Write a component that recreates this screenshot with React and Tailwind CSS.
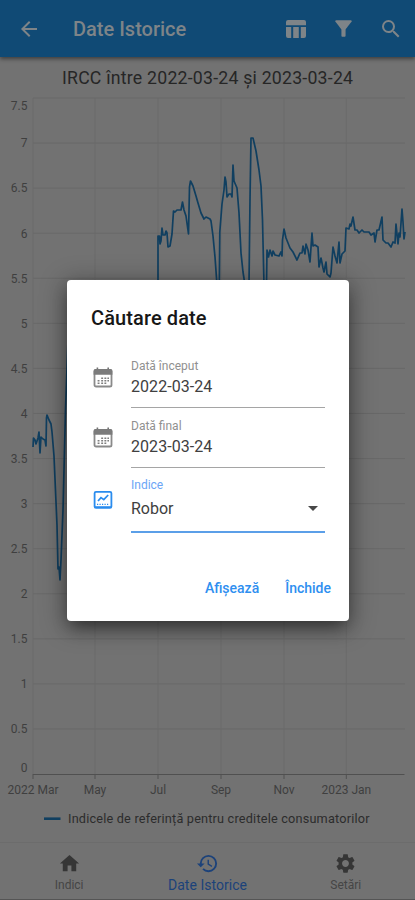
import React from "react";

const FONT = "font-[Roboto,'Noto_Sans',sans-serif]";

// Material glyphs on a 24px grid
const ICONS = {
  back: "M20 11H7.83l5.59-5.59L12 4l-8 8 8 8 1.41-1.41L7.83 13H20v-2z",
  table: "M4 3h16a2 2 0 0 1 2 2v3.2H2V5a2 2 0 0 1 2-2zM2 10h5.2v11H4a2 2 0 0 1-2-2zM9.2 10h5.6v11H9.2zM16.8 10H22v9a2 2 0 0 1-2 2h-3.2z",
  filter:
    "M4.25 5.61C6.27 8.2 10 13 10 13v6c0 .55.45 1 1 1h2c.55 0 1-.45 1-1v-6s3.72-4.8 5.74-7.39A.998.998 0 0 0 18.95 4H5.04c-.83 0-1.3.95-.79 1.61z",
  search:
    "M15.5 14h-.79l-.28-.27A6.471 6.471 0 0 0 16 9.5 6.5 6.5 0 1 0 9.5 16c1.61 0 3.09-.59 4.23-1.57l.27.28v.79l5 4.99L20.49 19l-4.99-5zm-6 0C7.01 14 5 11.99 5 9.5S7.01 5 9.5 5 14 7.01 14 9.5 11.99 14 9.5 14z",
  home: "M10 20v-6h4v6h5v-8h3L12 3 2 12h3v8z",
  gear:
    "M19.14 12.94c.04-.3.06-.61.06-.94 0-.32-.02-.64-.07-.94l2.03-1.58c.18-.14.23-.41.12-.61l-1.92-3.32c-.12-.22-.37-.29-.59-.22l-2.39.96c-.5-.38-1.03-.7-1.62-.94l-.36-2.54c-.04-.24-.24-.41-.48-.41h-3.84c-.24 0-.43.17-.47.41l-.36 2.54c-.59.24-1.13.57-1.62.94l-2.39-.96c-.22-.08-.47 0-.59.22L2.74 8.87c-.12.21-.08.47.12.61l2.03 1.58c-.05.3-.09.63-.09.94s.02.64.07.94l-2.03 1.58c-.18.14-.23.41-.12.61l1.92 3.32c.12.22.37.29.59.22l2.39-.96c.5.38 1.03.7 1.62.94l.36 2.54c.05.24.24.41.48.41h3.84c.24 0 .44-.17.47-.41l.36-2.54c.59-.24 1.13-.56 1.62-.94l2.39.96c.22.08.47 0 .59-.22l1.92-3.32c.12-.22.07-.47-.12-.61l-2.01-1.58zM12 15.6c-1.98 0-3.6-1.62-3.6-3.6s1.62-3.6 3.6-3.6 3.6 1.62 3.6 3.6-1.62 3.6-3.6 3.6z",
  history:
    "M13 3a9 9 0 0 0-9 9H1l3.89 3.89.07.14L9 12H6c0-3.87 3.13-7 7-7s7 3.13 7 7-3.13 7-7 7c-1.93 0-3.68-.79-4.94-2.06l-1.42 1.42A8.954 8.954 0 0 0 13 21a9 9 0 0 0 0-18zm-1 5v5l4.28 2.54.72-1.21-3.5-2.08V8H12z",
};

function Icon({ name, className }) {
  return (
    <svg viewBox="0 0 24 24" fill="currentColor" className={className}>
      <path d={ICONS[name]} />
    </svg>
  );
}

function CalendarIcon() {
  return (
    <svg viewBox="0 0 20 22" className="h-[22px] w-5 shrink-0">
      <path d="M4.4 .6v3M15.2 .6v3" stroke="#757575" strokeWidth="1.6" />
      <rect x="1.5" y="2.8" width="17" height="16.7" rx="1.6" fill="#fff" stroke="#8a8a8a" strokeWidth="1.8" />
      <path d="M.6 7.8V3.9q0-1.8 1.8-1.8h15.2q1.8 0 1.8 1.8v3.9z" fill="#7b7b7b" />
      <path
        d="M8.2 11.2h1.9M11.4 11.2h1.9M14.4 11.2h1.6M4.6 13.7h1.9M8.2 13.7h1.9M11.4 13.7h1.9M14.4 13.7h1.6M4.6 16.2h1.9M8.2 16.2h1.9M11.4 16.2h1.9"
        stroke="#7d7d7d"
        strokeWidth="1.4"
      />
    </svg>
  );
}

function ChartIcon() {
  return (
    <svg viewBox="0 0 20 20" fill="none" stroke="#2a8cee" className="h-5 w-5 shrink-0">
      <rect x="1.6" y="1.9" width="16.8" height="16" rx="1.4" strokeWidth="1.8" />
      <path d="M5 11l3-3.4 2.8 2 4.4-4.6" strokeWidth="1.7" />
      <path d="M4 14.4h12.4" strokeWidth="1.2" strokeDasharray="1.2 1.3" />
      <path d="M2 16.8h16" strokeWidth="1.2" />
    </svg>
  );
}

const LEVELS = ["7.5", "7", "6.5", "6", "5.5", "5", "4.5", "4", "3.5", "3", "2.5", "2", "1.5", "1", "0.5", "0"];
const MONTHS = [
  [33, "2022 Mar"],
  [95, "May"],
  [158, "Jul"],
  [221, "Sep"],
  [284, "Nov"],
  [346.3, "2023 Jan"],
];

const SERIES =
  "33,447 33.5,438 35,440 36,444 38,438 39,432 40,453 41,437 43,439 45,440 46,446 46.5,418 47,415 49,420 51,424 52,432 54,456 57,525 58,569 59,567 60,580 61,560 63,510 65.5,410 68,340 158,281 158,236 159.5,236 160,244 161,241 162,228 163,235 165,235 166,231 167,233 168,247 170,246 172,234 173.5,211 175,212 177,210 181,210 182.5,202 184,210 186,216 188.5,234 189.5,187 190.5,181 193,186 196,196 198,203 201,213 204,219 206,217 210,219 211,221 213,236 215,257 217,285 219.3,285 219.8,232 222,204 224,190 225,177 226,182 227,197 229,194 231,194 232,197 233,165 234,181 237,188 239,213 241,253 243,272 245,285 249,285 250,200 251,138 253,138 256,151 259,170 261,186 262.5,220 264,285 266.5,285 267,250 268.5,257 270,250 272,256 273,251 275,255 279,256 281,252 282,256 282.5,240 284,229 286,238 290,248 293,252 297,260 300,253 302,253 303,246 305,254 306,244 308,250 310,262 312,233 313,246 315,245 318,247 319,267 321,258 323,268 324,272 326,262 327,274 330,277 331,273 333,247 335,256 337,263 339,242 340,263 342,254 345,251 346,228 349,229 350,224 351,226 353,217 355,230 357,230 359,233 362,230 364,232 369,232 371,235 374,233 375,242 377,230 379,230 382,217 383,240 386,243 388,243 391,247 393,242 395,243 396,224 398,244 399,233 400,237 402,209 403,222 404,239 405,232";

function HistoryChart() {
  return (
    <svg viewBox="0 57 415 785" className="block h-[785px] w-full shrink-0">
      <text x="207.5" y="84" textAnchor="middle" fontSize="17.7" fill="#262626" textLength="291">
        IRCC între 2022-03-24 și 2023-03-24
      </text>
      {LEVELS.map((label, i) => {
        const y = 98 + i * 45.07;
        const shift = i === 0 ? 7.5 : i === 15 ? -6.5 : 0;
        return (
          <g key={label}>
            {i < 15 && <path d={`M33 ${y}H405`} stroke="#696969" />}
            <text x="27.5" y={y + shift + 4.3} textAnchor="end" fontSize="12" fill="#3f3f3f">
              {label}
            </text>
          </g>
        );
      })}
      {MONTHS.map(([x, label]) => (
        <g key={label}>
          <path d={`M${x} 98V774`} stroke="#6b6b6b" />
          <path d={`M${x} 774V779`} stroke="#505050" />
          <text x={x} y="794" textAnchor="middle" fontSize="12" fill="#3f3f3f">
            {label}
          </text>
        </g>
      ))}
      <path d="M33 774.5H404.5" stroke="#505050" />
      <polyline points={SERIES} fill="none" stroke="#103f60" strokeWidth="1.7" strokeLinejoin="round" />
      <path d="M44 818.7H60.5" stroke="#103f60" strokeWidth="2.6" />
      <text x="68" y="823" fontSize="12.7" fill="#2c2c2c" textLength="301.5">
        Indicele de referință pentru creditele consumatorilor
      </text>
    </svg>
  );
}

function DateField({ label, value }) {
  return (
    <div className="flex h-[59.5px]">
      <div className="flex w-10 shrink-0 pl-[2px] pt-[9px]">
        <CalendarIcon />
      </div>
      <div className="h-[50px] w-[194px] border-b border-[#a5a5a5]">
        <div className="pt-px text-[12px] leading-[15px] text-[#909090]">{label}</div>
        <div className="mt-[3px] text-[16px] leading-[19px] tracking-[0.06px] text-[#404040]">{value}</div>
      </div>
    </div>
  );
}

function SearchDialog() {
  return (
    <div
      role="dialog"
      className="absolute left-[67px] top-[280px] flex h-[341px] w-[282px] flex-col rounded-[4px] bg-white pl-6 shadow-[0_9px_16px_-4px_rgba(0,0,0,0.45),0_4px_24px_4px_rgba(0,0,0,0.28)]"
    >
      <h2 className="mt-[26px] text-[20px] font-medium leading-6 tracking-[0.1px] text-[#171717]">Căutare date</h2>
      <div className="mt-[28px]">
        <DateField label="Dată început" value="2022-03-24" />
        <DateField label="Dată final" value="2023-03-24" />
        <div className="flex">
          <div className="flex w-10 shrink-0 pl-[2px] pt-[13px]">
            <ChartIcon />
          </div>
          <div className="h-[56px] w-[194px] border-b-2 border-[#5b9fe8]">
            <div className="pt-px text-[12px] leading-[15px] text-[#6ba5f6]">Indice</div>
            <div className="mt-[6px] flex items-center justify-between pr-[7px] text-[16px] leading-[19px] text-[#404040]">
              Robor
              <span className="h-0 w-0 border-x-[5px] border-t-[5px] border-x-transparent border-t-[#484848]" />
            </div>
          </div>
        </div>
      </div>
      <div className="mt-[45px] flex justify-end gap-[26px] pr-[18px] text-[14px] font-medium leading-5 text-[#2f8ff0]">
        <button>Afișează</button>
        <button>Închide</button>
      </div>
    </div>
  );
}

function Tab({ icon, label, active }) {
  return (
    <div
      className={
        active
          ? "flex w-[138.4px] flex-col items-center pt-[9px] text-[#1c427a]"
          : "flex w-[138.4px] flex-col items-center pt-[9px] text-[#363636]"
      }
    >
      <Icon name={icon} className="h-[23px] w-[23px]" />
      <span
        className={
          active ? "mt-px text-[14px] leading-[18px] tracking-[0.04px]" : "mt-px text-[12px] leading-[18px] text-[#454545]"
        }
      >
        {label}
      </span>
    </div>
  );
}

export default function App() {
  return (
    <div className={`relative flex h-[900px] w-[415px] flex-col overflow-hidden bg-[#727272] ${FONT}`}>
      <header className="relative flex h-[57px] shrink-0 items-center bg-[#104a75] pl-[17px] pr-[12px] text-[#7e8488] shadow-[0_2px_4px_rgba(0,0,0,0.45)]">
        <Icon name="back" className="h-[24px] w-[24px]" />
        <h1 className="ml-[32px] flex-1 whitespace-nowrap text-[20px] font-medium">Date Istorice</h1>
        <Icon name="table" className="mr-[23px] h-[24px] w-[24px]" />
        <Icon name="filter" className="mr-[23px] h-[25px] w-[25px]" />
        <Icon name="search" className="h-[24px] w-[24px]" />
      </header>
      <HistoryChart />
      <nav className="flex h-[58px] shrink-0 border-y border-t-[#6c6c6c] border-b-[#555555]">
        <Tab icon="home" label="Indici" />
        <Tab icon="history" label="Date Istorice" active />
        <Tab icon="gear" label="Setări" />
      </nav>
      <SearchDialog />
    </div>
  );
}
